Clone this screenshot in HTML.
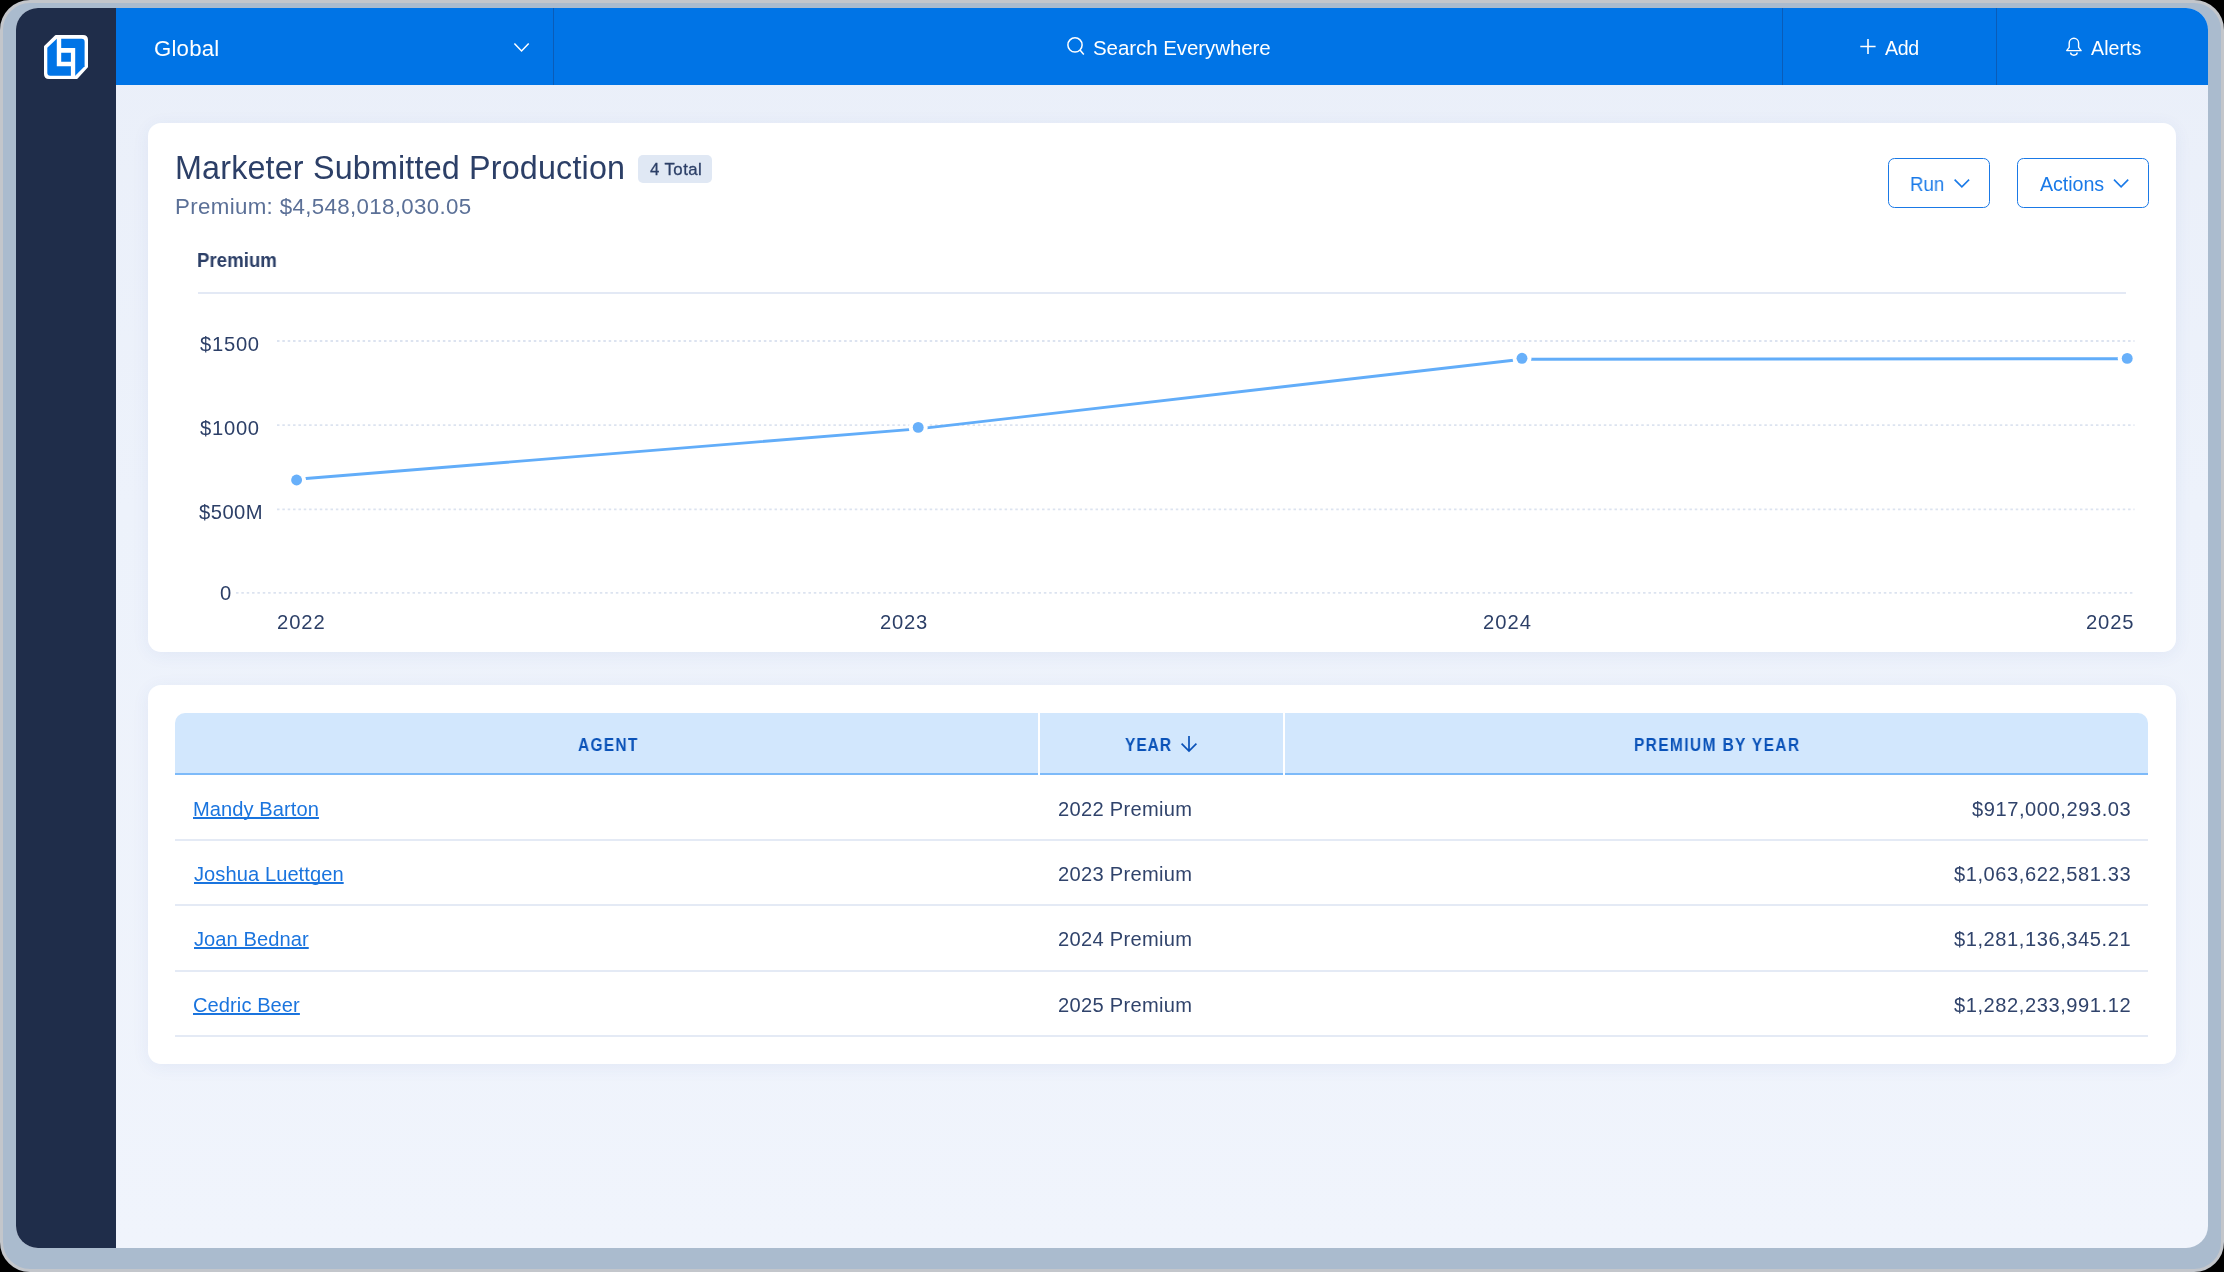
<!DOCTYPE html>
<html><head><meta charset="utf-8">
<style>
*{margin:0;padding:0;box-sizing:border-box}
html,body{width:2224px;height:1272px;overflow:hidden;background:#000;font-family:"Liberation Sans",sans-serif}
.a{position:absolute}
.t{position:absolute;white-space:nowrap;font-family:"Liberation Sans",sans-serif;will-change:transform}
#frame{left:0;top:0;width:2224px;height:1272px;border-radius:30px;background:#aabbce;border:3.5px solid #c3c6cb}
#win{left:16px;top:8px;width:2192px;height:1240px;border-radius:22px;overflow:hidden;background:linear-gradient(180deg,#eaeff9 0px,#edf2fb 500px,#f0f4fc 1240px)}
#side{left:0;top:0;width:100px;height:1240px;background:#1f2d4a}
#hdr{left:100px;top:0;width:2092px;height:77px;background:#0074e6}
.dv{top:0;width:1px;height:77px;background:#0a5cb8}
.card{left:132px;width:2028px;background:#fff;border-radius:13px;box-shadow:0 3px 18px rgba(40,80,160,0.065)}
.btn{top:157.8px;height:50px;border:1.8px solid #1a79e6;border-radius:6.5px;background:#fff}
</style></head><body>
<div id="frame" class="a"></div>
<div id="win" class="a">
  <div id="side" class="a"></div>
  <div id="hdr" class="a">
    <div class="a dv" style="left:437px"></div>
    <div class="a dv" style="left:1666px"></div>
    <div class="a dv" style="left:1880px"></div>
  </div>
  <div class="a card" style="top:115px;height:529px"></div>
  <div class="a card" style="top:677.3px;height:378.5px"></div>
</div>

<!-- card 1 bits -->
<div class="a" style="left:638.4px;top:155px;width:73.5px;height:27.5px;border-radius:5px;background:#e0e8f4"></div>
<div class="a btn" style="left:1887.5px;width:102.2px"></div>
<div class="a btn" style="left:2017px;width:131.5px"></div>
<div class="a" style="left:197.8px;top:292px;width:1928.5px;height:2px;background:#e3e9f5"></div>

<!-- table -->
<div class="a" style="left:175.3px;top:712.8px;width:1972.7px;height:62.2px;border-radius:10px 10px 0 0;background:#d2e7fd"></div>
<div class="a" style="left:175.3px;top:773px;width:1972.7px;height:2px;background:#7dbaf9"></div>
<div class="a" style="left:1038px;top:712.8px;width:2px;height:62.2px;background:#fff"></div>
<div class="a" style="left:1283px;top:712.8px;width:1.5px;height:62.2px;background:#fff"></div>
<div class="a" style="left:175px;top:839px;width:1973px;height:2px;background:#e4eaf5"></div>
<div class="a" style="left:175px;top:904.3px;width:1973px;height:2px;background:#e4eaf5"></div>
<div class="a" style="left:175px;top:969.6px;width:1973px;height:2px;background:#e4eaf5"></div>
<div class="a" style="left:175px;top:1035px;width:1973px;height:2px;background:#e4eaf5"></div>

<svg class="a" style="left:0;top:0" width="2224" height="1272" viewBox="0 0 2224 1272">
  <!-- logo -->
  <g transform="translate(36,26)">
    <path d="M20,10.2 L47,10.2 Q50.8,10.2 50.8,14 L50.8,40.8 L40.8,51.8 L13,51.8 Q9.2,51.8 9.2,48 L9.2,20.6 Z" fill="#fff" stroke="#fff" stroke-width="2.4" stroke-linejoin="round"/>
    <path d="M20.8,12.7 L45.6,12.7 Q48.6,12.7 48.6,15.7 L48.6,40.3 L39.2,49.8 L14.3,49.8 Q11.3,49.8 11.3,46.8 L11.3,21.7 Z" fill="#0074e6"/>
    <path d="M20.8,12 H25.2 V21.9 H39.2 V50.4 H34.9 V40.3 H20.8 Z M25.2,26.7 V35.8 H34.9 V26.7 Z" fill="#fff" fill-rule="evenodd"/>
  </g>
  <!-- header icons -->
  <path d="M514.4,43.4 L521.55,50.9 L528.7,43.4" fill="none" stroke="#fff" stroke-width="1.5"/>
  <circle cx="1075" cy="44.9" r="7.1" fill="none" stroke="#fff" stroke-width="1.5"/>
  <path d="M1080,50 L1083.8,54.6" stroke="#fff" stroke-width="1.5"/>
  <path d="M1868,38.9 V54.1 M1860.3,46.5 H1875.6" stroke="#fff" stroke-width="1.6"/>
  <path d="M2066.7,50.6 L2069.2,47.3 V43 A4.7,4.7 0 0 1 2078.6,43 V47.3 L2081.1,50.6 Z" fill="none" stroke="#fff" stroke-width="1.4" stroke-linejoin="round"/>
  <path d="M2070.6,52.6 A3.3,2.6 0 0 0 2077.2,52.6" fill="none" stroke="#fff" stroke-width="1.4"/>
  <!-- button chevrons -->
  <path d="M1954.6,179.6 L1961.85,186.8 L1969.1,179.6" fill="none" stroke="#1a7ae8" stroke-width="1.6"/>
  <path d="M2114,179.6 L2121.1,186.8 L2128.2,179.6" fill="none" stroke="#1a7ae8" stroke-width="1.6"/>
  <!-- gridlines -->
  <g stroke="#dce3f0" stroke-width="1.8" stroke-dasharray="2.5 2.85">
    <line x1="277" y1="341" x2="2134.5" y2="341"/>
    <line x1="277" y1="425.1" x2="2134.5" y2="425.1"/>
    <line x1="277" y1="509.3" x2="2134.5" y2="509.3"/>
    <line x1="236" y1="592.8" x2="2134.5" y2="592.8"/>
  </g>
  <!-- line -->
  <polyline points="296.6,479.3 918.2,428.9 1522,359.2 2127.2,358.7" fill="none" stroke="#62adf9" stroke-width="2.9"/>
  <g fill="#fff">
    <circle cx="296.6" cy="480" r="9.5"/><circle cx="918.2" cy="427.8" r="9.5"/><circle cx="1522" cy="358.5" r="9.5"/><circle cx="2127.2" cy="358.5" r="9.5"/>
  </g>
  <g fill="#68b0fa">
    <circle cx="296.6" cy="480" r="5.45"/><circle cx="918.2" cy="427.4" r="5.45"/><circle cx="1522" cy="358.3" r="5.45"/><circle cx="2127.2" cy="358.4" r="5.45"/>
  </g>
  <!-- sort arrow -->
  <path d="M1189,736 V751 M1181.6,743.6 L1189,751 L1196.4,743.6" fill="none" stroke="#0a52b8" stroke-width="1.7"/>
</svg>

<div class="t" style="left:154.19px;top:37.93px;font-size:22.20px;line-height:22.20px;letter-spacing:0.201px;color:#fff;font-weight:normal;">Global</div>
<div class="t" style="left:1092.67px;top:37.78px;font-size:20.50px;line-height:20.50px;letter-spacing:-0.070px;color:#fff;font-weight:normal;">Search Everywhere</div>
<div class="t" style="left:1885.00px;top:38.54px;font-size:19.60px;line-height:19.60px;letter-spacing:-0.358px;color:#fff;font-weight:normal;">Add</div>
<div class="t" style="left:2090.90px;top:38.54px;font-size:19.60px;line-height:19.60px;letter-spacing:0.062px;color:#fff;font-weight:normal;">Alerts</div>
<div class="t" style="left:175.42px;top:151.85px;font-size:32.30px;line-height:32.30px;letter-spacing:0.172px;color:#2c3f67;font-weight:normal;">Marketer Submitted Production</div>
<div class="t" style="left:649.66px;top:162.02px;font-size:16.80px;line-height:16.80px;letter-spacing:0.431px;color:#2c3f67;font-weight:normal;-webkit-text-stroke:0.3px #2c3f67">4 Total</div>
<div class="t" style="left:174.62px;top:195.54px;font-size:22.30px;line-height:22.30px;letter-spacing:0.340px;color:#5b7097;font-weight:normal;">Premium: $4,548,018,030.05</div>
<div class="t" style="left:1910.41px;top:174.85px;font-size:19.70px;line-height:19.70px;letter-spacing:0.000px;color:#1a7ae8;font-weight:normal;transform:scaleX(0.9461);transform-origin:0 0;">Run</div>
<div class="t" style="left:2040.00px;top:174.85px;font-size:19.70px;line-height:19.70px;letter-spacing:-0.071px;color:#1a7ae8;font-weight:normal;">Actions</div>
<div class="t" style="left:197.44px;top:250.62px;font-size:19.50px;line-height:19.50px;letter-spacing:0.000px;color:#2c3f67;font-weight:bold;transform:scaleX(0.9577);transform-origin:0 0;">Premium</div>
<div class="t" style="left:199.80px;top:334.08px;font-size:20.20px;line-height:20.20px;letter-spacing:0.739px;color:#2c3f67;font-weight:normal;">$1500</div>
<div class="t" style="left:199.80px;top:418.13px;font-size:20.20px;line-height:20.20px;letter-spacing:0.739px;color:#2c3f67;font-weight:normal;">$1000</div>
<div class="t" style="left:199.20px;top:502.23px;font-size:20.20px;line-height:20.20px;letter-spacing:0.464px;color:#2c3f67;font-weight:normal;">$500M</div>
<div class="t" style="left:220.44px;top:582.73px;font-size:20.20px;line-height:20.20px;letter-spacing:0.000px;color:#2c3f67;font-weight:normal;">0</div>
<div class="t" style="left:277.09px;top:612.23px;font-size:20.20px;line-height:20.20px;letter-spacing:0.942px;color:#2c3f67;font-weight:normal;">2022</div>
<div class="t" style="left:880.24px;top:612.23px;font-size:20.20px;line-height:20.20px;letter-spacing:0.775px;color:#2c3f67;font-weight:normal;">2023</div>
<div class="t" style="left:1483.39px;top:612.23px;font-size:20.20px;line-height:20.20px;letter-spacing:0.991px;color:#2c3f67;font-weight:normal;">2024</div>
<div class="t" style="left:2086.49px;top:612.23px;font-size:20.20px;line-height:20.20px;letter-spacing:0.858px;color:#2c3f67;font-weight:normal;">2025</div>
<div class="t" style="left:577.64px;top:735.50px;font-size:18.00px;line-height:18.00px;letter-spacing:1.523px;color:#0a52b8;font-weight:bold;transform:scaleX(0.8600);transform-origin:0 0;">AGENT</div>
<div class="t" style="left:1124.69px;top:735.50px;font-size:18.00px;line-height:18.00px;letter-spacing:1.178px;color:#0a52b8;font-weight:bold;transform:scaleX(0.8600);transform-origin:0 0;">YEAR</div>
<div class="t" style="left:1633.72px;top:735.70px;font-size:18.00px;line-height:18.00px;letter-spacing:1.613px;color:#0a52b8;font-weight:bold;transform:scaleX(0.8600);transform-origin:0 0;">PREMIUM BY YEAR</div>
<div class="t" style="left:192.59px;top:798.51px;font-size:20.10px;line-height:20.10px;letter-spacing:0.072px;color:#1a74de;font-weight:normal;text-decoration:underline;text-decoration-thickness:1.7px;text-underline-offset:0.6px;text-decoration-skip-ink:none">Mandy Barton</div>
<div class="t" style="left:1057.79px;top:798.51px;font-size:20.10px;line-height:20.10px;letter-spacing:0.306px;color:#30436b;font-weight:normal;">2022 Premium</div>
<div class="t" style="left:1971.70px;top:798.51px;font-size:20.10px;line-height:20.10px;letter-spacing:0.561px;color:#30436b;font-weight:normal;">$917,000,293.03</div>
<div class="t" style="left:193.80px;top:863.85px;font-size:20.10px;line-height:20.10px;letter-spacing:0.072px;color:#1a74de;font-weight:normal;text-decoration:underline;text-decoration-thickness:1.7px;text-underline-offset:0.6px;text-decoration-skip-ink:none">Joshua Luettgen</div>
<div class="t" style="left:1057.79px;top:863.85px;font-size:20.10px;line-height:20.10px;letter-spacing:0.306px;color:#30436b;font-weight:normal;">2023 Premium</div>
<div class="t" style="left:1953.69px;top:863.85px;font-size:20.10px;line-height:20.10px;letter-spacing:0.561px;color:#30436b;font-weight:normal;">$1,063,622,581.33</div>
<div class="t" style="left:193.80px;top:929.17px;font-size:20.10px;line-height:20.10px;letter-spacing:0.072px;color:#1a74de;font-weight:normal;text-decoration:underline;text-decoration-thickness:1.7px;text-underline-offset:0.6px;text-decoration-skip-ink:none">Joan Bednar</div>
<div class="t" style="left:1057.79px;top:929.17px;font-size:20.10px;line-height:20.10px;letter-spacing:0.306px;color:#30436b;font-weight:normal;">2024 Premium</div>
<div class="t" style="left:1953.89px;top:929.17px;font-size:20.10px;line-height:20.10px;letter-spacing:0.561px;color:#30436b;font-weight:normal;">$1,281,136,345.21</div>
<div class="t" style="left:193.19px;top:994.50px;font-size:20.10px;line-height:20.10px;letter-spacing:0.072px;color:#1a74de;font-weight:normal;text-decoration:underline;text-decoration-thickness:1.7px;text-underline-offset:0.6px;text-decoration-skip-ink:none">Cedric Beer</div>
<div class="t" style="left:1057.79px;top:994.50px;font-size:20.10px;line-height:20.10px;letter-spacing:0.306px;color:#30436b;font-weight:normal;">2025 Premium</div>
<div class="t" style="left:1953.89px;top:994.50px;font-size:20.10px;line-height:20.10px;letter-spacing:0.561px;color:#30436b;font-weight:normal;">$1,282,233,991.12</div>
</body></html>
